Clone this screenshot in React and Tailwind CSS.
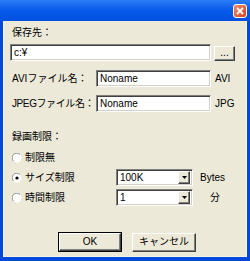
const font = { fontFamily: '"Liberation Sans", "Noto Sans CJK JP", sans-serif' };

function Sunken({ className = "", children }) {
  return (
    <div
      className={`flex items-center bg-white border border-t-[#7f7f7f] border-l-[#7f7f7f] border-b-white border-r-white shadow-[inset_1px_1px_0_#404040,inset_-1px_-1px_0_#d4d0c8] ${className}`}
    >
      {children}
    </div>
  );
}

function Raised({ className = "", children }) {
  return (
    <div
      className={`flex items-center justify-center bg-[#ECE9D8] border border-t-white border-l-white border-b-[#404040] border-r-[#404040] shadow-[inset_-1px_-1px_0_#808080] ${className}`}
    >
      {children}
    </div>
  );
}

function Radio({ on }) {
  return (
    <svg width="10" height="10" viewBox="0 0 10 10" className="shrink-0">
      <circle cx="5" cy="5" r="4.5" fill="#fff" />
      <path d="M1.5 8 A4.3 4.3 0 0 1 8 1.5" stroke="#909090" strokeWidth="1" fill="none" />
      {on && <circle cx="5" cy="5" r="1.6" fill="#000" />}
    </svg>
  );
}

function Select({ value, className = "" }) {
  return (
    <Sunken className={`h-[17px] justify-between pl-[3px] pr-[2px] ${className}`}>
      <span>{value}</span>
      <Raised className="w-[12px] h-[13px]">
        <svg width="5" height="3" viewBox="0 0 5 3">
          <path d="M0 0h5L2.5 3z" fill="#000" />
        </svg>
      </Raised>
    </Sunken>
  );
}

export default function App() {
  return (
    <div
      style={font}
      className="w-[250px] h-[261px] flex flex-col bg-[#0049D9] text-[10px] text-black leading-[12px] whitespace-nowrap overflow-hidden"
    >
      <div className="h-[21px] shrink-0 flex items-start justify-end pr-[3px] pt-[4px] bg-gradient-to-b from-[#2C7DF8] via-[#0559EA] to-[#0451E0]">
        <div className="w-[14px] h-[14px] rounded-[3px] border border-white bg-gradient-to-br from-[#F08A6A] to-[#D5421C] flex items-center justify-center">
          <svg width="8" height="8" viewBox="0 0 8 8">
            <path d="M1 1L7 7M7 1L1 7" stroke="#fff" strokeWidth="1.8" />
          </svg>
        </div>
      </div>
      <div className="flex-1 mx-[3px] mb-[4px] bg-[#ECE9D8] border-l border-r border-b border-[#F5F3EA] flex flex-col">
        <div className="mt-[6px] ml-[8px] h-[12px]">保存先：</div>
        <div className="mt-[5px] flex items-center h-[17px]">
          <Sunken className="ml-[6px] w-[201px] h-[17px] pl-[3px]">
            <span>c:¥</span>
          </Sunken>
          <Raised className="ml-[3px] w-[21px] h-[15px] mt-[2px]">
            <span className="text-[10px] leading-[10px] -mt-[2px]">...</span>
          </Raised>
        </div>
        <div className="mt-[9px] flex items-center h-[17px]">
          <span className="ml-[8px] w-[84px]">AVIファイル名：</span>
          <Sunken className="w-[115px] h-[17px] pl-[3px]">
            <span>Noname</span>
          </Sunken>
          <span className="ml-[4px]">AVI</span>
        </div>
        <div className="mt-[8px] flex items-center h-[17px]">
          <span className="ml-[8px] w-[84px] tracking-[-0.4px]">JPEGファイル名：</span>
          <Sunken className="w-[115px] h-[17px] pl-[3px]">
            <span>Noname</span>
          </Sunken>
          <span className="ml-[4px]">JPG</span>
        </div>
        <div className="mt-[19px] ml-[8px] h-[12px]">録画制限：</div>
        <div className="mt-[9px] ml-[8px] flex items-center gap-[3px] h-[12px]">
          <Radio />
          <span>制限無</span>
        </div>
        <div className="mt-[5px] flex items-center h-[17px]">
          <div className="ml-[8px] w-[104px] flex items-center gap-[3px]">
            <Radio on />
            <span>サイズ制限</span>
          </div>
          <Select value="100K" className="w-[77px]" />
          <span className="ml-[7px]">Bytes</span>
        </div>
        <div className="mt-[3px] flex items-center h-[17px]">
          <div className="ml-[8px] w-[104px] flex items-center gap-[3px]">
            <Radio />
            <span>時間制限</span>
          </div>
          <Select value="1" className="w-[77px]" />
          <span className="ml-[17px]">分</span>
        </div>
        <div className="mt-[26px] ml-[54px] flex items-center gap-[10px]">
          <div className="border border-black">
            <Raised className="w-[62px] h-[18px]">
              <span>OK</span>
            </Raised>
          </div>
          <Raised className="w-[64px] h-[19px]">
            <span>キャンセル</span>
          </Raised>
        </div>
      </div>
    </div>
  );
}
